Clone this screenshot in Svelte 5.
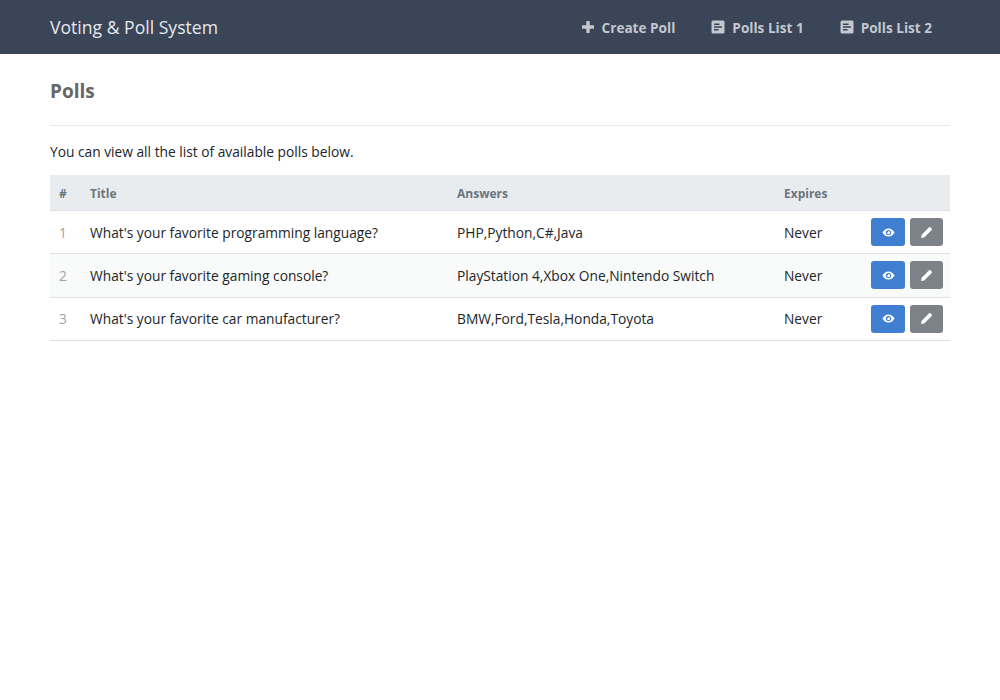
<script>
  const polls = [
    { id: 1, title: "What's your favorite programming language?", answers: 'PHP,Python,C#,Java' },
    { id: 2, title: "What's your favorite gaming console?", answers: 'PlayStation 4,Xbox One,Nintendo Switch' },
    { id: 3, title: "What's your favorite car manufacturer?", answers: 'BMW,Ford,Tesla,Honda,Toyota' }
  ];
</script>

{#snippet listIcon()}
  <svg class="icon" viewBox="0 0 14 14" aria-hidden="true">
    <path fill="currentColor" fill-rule="evenodd" d="M2 .5h10A1.500 1.500 0 0 1 13.500 2v10a1.500 1.500 0 0 1-1.500 1.500H2A1.500 1.500 0 0 1 .5 12V2A1.500 1.500 0 0 1 2 .5zM3 3.500V5h5.500V3.500zM3 6.300v1.400h8V6.300zM3 9v1.500h4.500V9z" />
  </svg>
{/snippet}

<nav class="navbar">
  <span class="brand">Voting &amp; Poll System</span>
  <div class="links">
    <span class="link">
      <svg class="icon" viewBox="0 0 14 14" aria-hidden="true">
        <path fill="currentColor" d="M5.800 1h2.400a.5.5 0 0 1 .5.5v3.800h3.800a.5.5 0 0 1 .5.5v2.400a.5.5 0 0 1-.5.5H8.700v3.800a.5.5 0 0 1-.5.5H5.800a.5.5 0 0 1-.5-.5V8.700H1.500a.5.5 0 0 1-.5-.5V5.800a.5.5 0 0 1 .5-.5h3.800V1.500a.5.5 0 0 1 .5-.5z" />
      </svg>
      Create Poll
    </span>
    <span class="link">{@render listIcon()} Polls List 1</span>
    <span class="link">{@render listIcon()} Polls List 2</span>
  </div>
</nav>

<main class="content">
  <h2>Polls</h2>
  <p>You can view all the list of available polls below.</p>
  <table>
    <thead>
      <tr>
        <th class="num">#</th>
        <th class="title">Title</th>
        <th class="answers">Answers</th>
        <th class="expires">Expires</th>
        <th class="actions"></th>
      </tr>
    </thead>
    <tbody>
      {#each polls as poll}
        <tr>
          <td class="num">{poll.id}</td>
          <td>{poll.title}</td>
          <td>{poll.answers}</td>
          <td>Never</td>
          <td class="actions">
            <div class="btns">
              <button class="btn view" aria-label="View">
                <svg viewBox="0 0 16 16" aria-hidden="true">
                  <path fill="currentColor" fill-rule="evenodd" d="M8 3c3.300 0 6 2.200 7.500 5-1.500 2.800-4.200 5-7.500 5S2 10.800.5 8C2 5.200 4.700 3 8 3zm0 1.800a3.200 3.200 0 1 0 0 6.400 3.200 3.200 0 0 0 0-6.400zM8 6a2 2 0 1 1-2 2c.6.300 1.700-.9 2-2z" />
                </svg>
              </button>
              <button class="btn edit" aria-label="Edit">
                <svg viewBox="0 0 16 16" aria-hidden="true">
                  <path fill="currentColor" d="M11.200 1.600a1.200 1.200 0 0 1 1.700 0l1.500 1.500a1.200 1.200 0 0 1 0 1.700L5.200 14 1.300 14.700 2 10.800z" />
                </svg>
              </button>
            </div>
          </td>
        </tr>
      {/each}
    </tbody>
  </table>
</main>

<style>
  :global(body) {
    background: #fff;
    font-family: "Open Sans", "Noto Sans", sans-serif;
    font-size: 14px;
    color: #212529;
  }

  .navbar {
    display: flex;
    justify-content: space-between;
    align-items: center;
    height: 54px;
    padding: 0 68px 0 50px;
    background: #3a4557;
  }

  .brand {
    color: #e6e8ec;
    font-size: 17.6px;
  }

  .links {
    display: flex;
    gap: 36px;
  }

  .link {
    display: flex;
    align-items: center;
    gap: 7px;
    color: #c3c7cf;
    font-size: 13.6px;
    font-weight: 700;
  }

  .icon {
    width: 14px;
    height: 14px;
  }

  .content {
    padding: 0 50px;
  }

  h2 {
    margin: 0;
    padding: 24px 0 21px;
    border-bottom: 1px solid #e8eaed;
    color: #666;
    font-size: 19px;
    font-weight: 700;
    line-height: 26px;
  }

  p {
    margin: 0;
    padding: 16px 0 13px;
    font-size: 13.75px;
    line-height: 20px;
  }

  table {
    width: 100%;
    border-collapse: collapse;
    table-layout: fixed;
  }

  th {
    height: 34px;
    padding: 1px 0 0 7px;
    background: #e9ecef;
    border-bottom: 1px solid #dee2e6;
    color: #6c757d;
    font-size: 12px;
    text-align: left;
  }

  td {
    height: 42.33px;
    padding: 0 0 0 7px;
    border-bottom: 1px solid #dee2e6;
    font-size: 13.75px;
  }

  tbody tr:nth-child(even) td {
    background: #f9fbfa;
  }

  .num {
    width: 24px;
    padding-left: 9px;
  }

  td.num {
    color: #a0a4a8;
  }

  .title {
    width: 360px;
  }

  .answers {
    width: 320px;
  }

  .expires {
    width: 80px;
  }

  .btns {
    display: flex;
    justify-content: flex-end;
    gap: 5px;
    padding-right: 7px;
  }

  .btn {
    display: flex;
    flex: none;
    align-items: center;
    justify-content: center;
    height: 28px;
    padding: 0;
    border: none;
    border-radius: 3px;
    color: #fff;
  }

  .btn svg {
    width: 13px;
    height: 13px;
  }

  .view {
    width: 34px;
    background: #3f7ed1;
  }

  .edit {
    width: 33px;
    background: #7c8288;
  }
</style>
